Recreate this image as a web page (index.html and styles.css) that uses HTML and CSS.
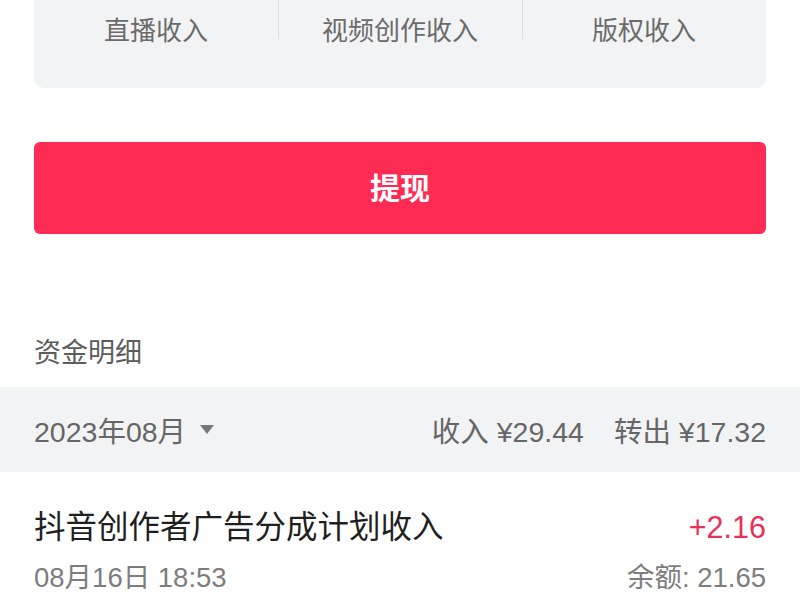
FILE: index.html
```html
<!DOCTYPE html>
<html lang="zh-CN">
<head>
<meta charset="utf-8">
<link rel="stylesheet" href="styles.css">
</head>
<body>
<div class="page">
  <div class="income-card">
    <div class="income-cell">直播收入</div>
    <div class="income-cell">视频创作收入</div>
    <div class="income-cell">版权收入</div>
  </div>
  <button class="withdraw">提现</button>
  <div class="section-title">资金明细</div>
  <div class="month-bar">
    <div class="month">2023年08月<span class="caret"></span></div>
    <div class="summary"><span>收入 ¥29.44</span><span>转出 ¥17.32</span></div>
  </div>
  <div class="record">
    <div class="record-line">
      <div class="record-title">抖音创作者广告分成计划收入</div>
      <div class="record-amount">+2.16</div>
    </div>
    <div class="record-line sub">
      <div class="record-time">08月16日 18:53</div>
      <div class="record-balance">余额: 21.65</div>
    </div>
  </div>
</div>
</body>
</html>
```
FILE: styles.css
```css
* { box-sizing: border-box; }
html, body { margin: 0; padding: 0; background: #fff; }
body {
  font-family: "Liberation Sans", "Noto Sans CJK SC", sans-serif;
  width: 800px;
  height: 600px;
  overflow: hidden;
}
.page { display: flex; flex-direction: column; }
.income-card {
  margin: 0 34px;
  height: 88px;
  background: #f2f3f4;
  border-radius: 0 0 10px 10px;
  display: flex;
  align-items: flex-start;
}
.income-cell {
  flex: 1;
  height: 58px;
  padding-top: 13px;
  line-height: 36px;
  font-size: 26px;
  color: #6b6b6b;
  text-align: center;
  position: relative;
}
.income-cell + .income-cell::before {
  content: "";
  position: absolute;
  left: 0; top: 0;
  width: 1px; height: 39px;
  background: #dcdcdd;
}
.withdraw {
  margin: 54px 34px 0;
  height: 92px;
  border: none;
  border-radius: 6px;
  background: #fe2c55;
  color: #fff;
  font-family: inherit;
  font-size: 30px;
  font-weight: 700;
  padding: 0 0 5px;
}
.section-title {
  margin: 99px 34px 0;
  line-height: 40px;
  font-size: 27px;
  color: #5c5c5c;
}
.month-bar {
  margin-top: 14px;
  height: 85px;
  background: #f2f3f5;
  padding: 0 34px;
  display: flex;
  align-items: center;
  justify-content: space-between;
  font-size: 28.5px;
  color: #666;
}
.month { display: flex; align-items: center; }
.caret {
  margin-left: 14px;
  width: 0; height: 0;
  border-left: 7px solid transparent;
  border-right: 7px solid transparent;
  border-top: 9px solid #777;
}
.summary { display: flex; gap: 30px; }
.record { padding: 35px 34px 0; }
.record-line {
  display: flex;
  justify-content: space-between;
  align-items: center;
  line-height: 40px;
  font-size: 31.5px;
  color: #1f1f1f;
}
.record-amount { color: #e8315a; font-size: 30.5px; }
.record-line.sub {
  margin-top: 13px;
  line-height: 36px;
  font-size: 27.5px;
  color: #7d7d7d;
}
```
